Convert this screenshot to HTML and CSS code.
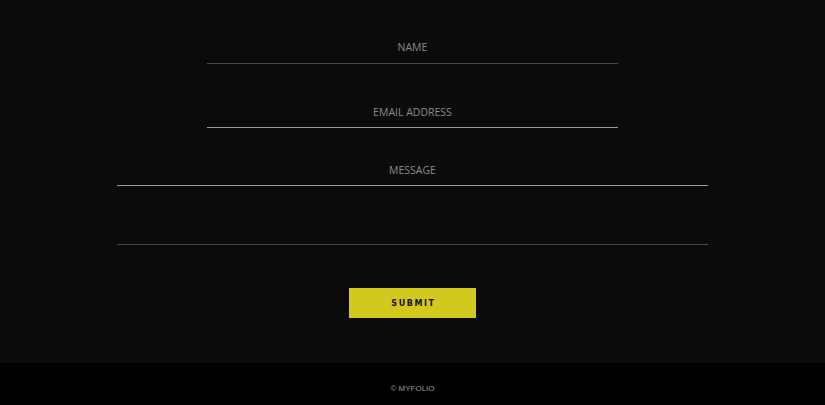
FILE: index.html
```html
<!DOCTYPE html>
<html lang="en">
<head>
<meta charset="utf-8">
<title>Contact</title>
<link rel="stylesheet" href="styles.css">
</head>
<body>
<main class="contact">
  <form class="form">
    <input class="field field-narrow field-dim" type="text" placeholder="NAME">
    <input class="field field-narrow field-light field-email" type="email" placeholder="EMAIL ADDRESS">
    <div class="message">
      <input class="field field-wide field-light" type="text" placeholder="MESSAGE">
      <textarea class="message-body"></textarea>
    </div>
    <button class="submit" type="button">SUBMIT</button>
  </form>
</main>
<footer class="footer">© MYFOLIO</footer>
</body>
</html>
```
FILE: styles.css
```css
* { box-sizing: border-box; }
html, body { margin: 0; padding: 0; }
body {
  background: #000;
  font-family: "Open Sans", "Liberation Sans", sans-serif;
}
.contact {
  background: #0b0b0b;
  height: 363px;
  padding-top: 34px;
}
.form {
  display: flex;
  flex-direction: column;
  align-items: center;
}
.field {
  display: block;
  height: 30px;
  background: transparent;
  border: 0;
  border-bottom: 1px solid #444;
  color: #ccc;
  text-align: center;
  font-family: "Open Sans", sans-serif;
  font-size: 10.5px;
  padding: 0 0 4px;
  outline: none;
}
.field-email, .field-wide { padding-bottom: 2px; }
.field::placeholder { color: #8a8a8a; opacity: 1; }
.field-narrow { width: 411px; }
.field-wide { width: 591px; }
.field-dim { border-bottom-color: #474747; }
.field-light { border-bottom-color: #9a9a9a; }
.field-email { margin-top: 34px; }
.message {
  margin-top: 28px;
  display: flex;
  flex-direction: column;
}
.message-body {
  display: block;
  width: 591px;
  height: 59px;
  background: transparent;
  border: 0;
  border-bottom: 1px solid #474747;
  resize: none;
  outline: none;
  color: #ccc;
}
.submit {
  margin-top: 43px;
  width: 127px;
  height: 30px;
  border: 0;
  background: #d1c91d;
  color: #141414;
  font-family: "DejaVu Sans", Arial, sans-serif;
  font-weight: 700;
  font-size: 8px;
  letter-spacing: 1.6px;
  padding: 0 0 0 2px;
  cursor: pointer;
}
.footer {
  height: 42px;
  display: flex;
  align-items: center;
  justify-content: center;
  color: #9a9a9a;
  font-family: "Liberation Sans", Arial, sans-serif;
  font-size: 8px;
  padding-top: 8px;
}
```
